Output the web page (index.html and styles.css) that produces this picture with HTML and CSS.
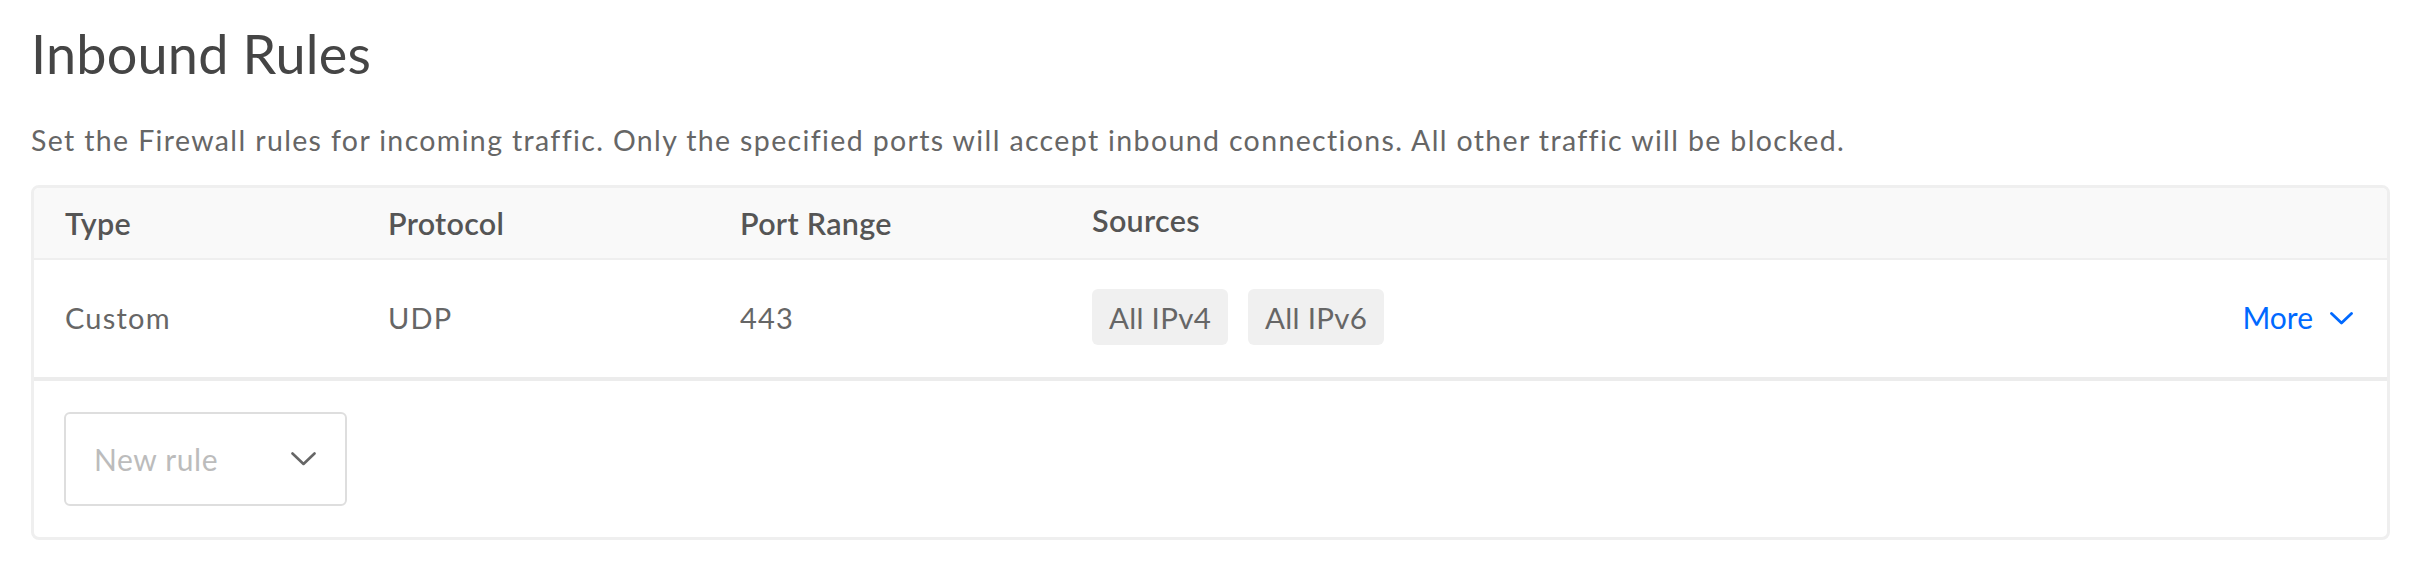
FILE: index.html
```html
<!DOCTYPE html>
<html lang="en">
<head>
<meta charset="utf-8">
<title>Inbound Rules</title>
<link rel="stylesheet" href="styles.css">
</head>
<body>
<main class="page">
  <h1 class="title">Inbound Rules</h1>
  <p class="desc">Set the Firewall rules for incoming traffic. Only the specified ports will accept inbound connections. All other traffic will be blocked.</p>
  <section class="card">
    <div class="row head">
      <div class="cell">Type</div>
      <div class="cell">Protocol</div>
      <div class="cell">Port Range</div>
      <div class="cell sources-h">Sources</div>
      <div class="cell"></div>
    </div>
    <div class="row body">
      <div class="cell">Custom</div>
      <div class="cell">UDP</div>
      <div class="cell">443</div>
      <div class="cell chips">
        <span class="chip">All IPv4</span>
        <span class="chip">All IPv6</span>
      </div>
      <div class="cell more-cell">
        <a class="more" href="#">More
          <svg class="chev" width="23" height="13" viewBox="0 0 23 13"><polyline points="1.5,1.5 11.5,11 21.5,1.5" fill="none" stroke="currentColor" stroke-width="2.8" stroke-linecap="round" stroke-linejoin="round"/></svg>
        </a>
      </div>
    </div>
    <div class="foot">
      <div class="select">
        <span class="placeholder">New rule</span>
        <svg class="chev" width="25" height="14" viewBox="0 0 25 14"><polyline points="1.5,1.5 12.5,12 23.5,1.5" fill="none" stroke="#666" stroke-width="2.6" stroke-linecap="round" stroke-linejoin="round"/></svg>
      </div>
    </div>
  </section>
</main>
</body>
</html>
```

FILE: styles.css
```css
* { box-sizing: border-box; }
html, body { margin: 0; padding: 0; background: #fff; }
body { font-family: "Lato", "Liberation Sans", sans-serif; }

.page { padding: 22px 30px 0 31px; }

.title {
  margin: 0;
  font-size: 54px;
  font-weight: 400;
  line-height: 64px;
  color: #454545;
  letter-spacing: 0.2px;
}

.desc {
  margin: 38px 0 0 0;
  font-size: 28.5px;
  line-height: 32px;
  color: #666;
  letter-spacing: 1.36px;
}

.card {
  margin-top: 29px;
  border: 3px solid #efefef;
  border-radius: 8px;
  overflow: hidden;
}

.row {
  display: grid;
  grid-template-columns: 323px 352px 352px 1fr auto;
  padding: 0 34px 0 31px;
  align-items: center;
}

.head {
  height: 72px;
  background: #f9f9f9;
  border-bottom: 2px solid #efefef;
  font-size: 30.5px;
  font-weight: 600;
  color: #555;
  letter-spacing: 0.3px;
}

.sources-h { padding-bottom: 6px; }

.body {
  height: 121px;
  border-bottom: 4px solid #ececec;
  font-size: 29px;
  color: #666;
  letter-spacing: 1.2px;
  padding-bottom: 3px;
}

.chips { display: flex; gap: 20px; letter-spacing: 0.3px; }

.chip {
  display: inline-flex;
  align-items: center;
  height: 56px;
  padding: 0 17px;
  background: #f0f0f0;
  border-radius: 6px;
  font-size: 29.5px;
  color: #666;
}

.more {
  display: inline-flex;
  align-items: center;
  gap: 17px;
  color: #0069ff;
  font-size: 30px;
  text-decoration: none;
  letter-spacing: 0;
}

.more .chev { margin-top: 2px; }

.foot { padding: 31px 30px; }

.select {
  width: 283px;
  height: 94px;
  border: 2px solid #dedede;
  border-radius: 6px;
  display: flex;
  align-items: center;
  justify-content: space-between;
  padding: 0 29px 0 28px;
}

.placeholder {
  font-size: 30px;
  color: #bcbcbc;
  letter-spacing: 0.6px;
}
```
